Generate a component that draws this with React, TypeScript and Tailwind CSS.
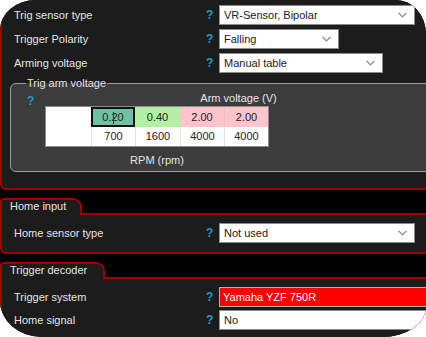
import React from "react";

const RED = "border-[#9e0000]";

function Chevron() {
  return (
    <svg width="9" height="6" viewBox="0 0 9 6" className="shrink-0">
      <path d="M0.5 0.8 L4.5 4.8 L8.5 0.8" fill="none" stroke="#7a7a7a" strokeWidth="1.1" />
    </svg>
  );
}

function Dropdown({ text, w }: { text: string; w: string }) {
  return (
    <div className={`${w} h-[20px] bg-white border border-[#8a8a8a] flex items-center justify-between pl-[4px] pr-[7px] text-[#1a1a1a]`}>
      <span>{text}</span>
      <Chevron />
    </div>
  );
}

function Q() {
  return <span className="w-[13px] text-[#1f9bd1] font-bold text-[12px] leading-none">?</span>;
}

function Row({ label, children }: { label: string; children: React.ReactNode }) {
  return (
    <div className="flex items-center h-[20px]">
      <span className="w-[192px] text-[#e4e4e4]">{label}</span>
      <Q />
      {children}
    </div>
  );
}

function Tab({ text, w }: { text: string; w: string }) {
  return (
    <div className={`${w} h-[17px] relative z-10 -mb-[2px] bg-[#1c1c1c] border-2 border-b-0 ${RED} rounded-tr-[9px] rounded-tl-[4px] pl-[8px] flex items-center text-[#e4e4e4]`}>
      <span className="-mt-[2px]">{text}</span>
    </div>
  );
}

export default function App() {
  return (
    <div className="w-[426px] h-[337px] bg-white overflow-hidden" style={{ fontFamily: '"Liberation Sans", Arial, sans-serif' }}>
      <div className="w-full h-full bg-black overflow-hidden rounded-tl-[36px_30px] rounded-tr-[30px_34px] rounded-bl-[42px_36px] rounded-br-[44px_30px] text-[11px] leading-[13px]">
        {/* Top panel */}
        <div className={`w-[460px] h-[190px] bg-[#1c1c1c] border-l-2 border-b-2 ${RED} rounded-bl-[6px] pt-[5px] pl-[12px]`}>
          <div className="flex flex-col gap-[4px]">
            <Row label="Trig sensor type">
              <Dropdown text="VR-Sensor, Bipolar" w="w-[196px]" />
            </Row>
            <Row label="Trigger Polarity">
              <Dropdown text="Falling" w="w-[120px]" />
            </Row>
            <Row label="Arming voltage">
              <Dropdown text="Manual table" w="w-[164px]" />
            </Row>
          </div>
          <fieldset className="mt-[4px] -ml-[4px] h-[95px] bg-[#3c3c3c] border border-[#9c9c9c] rounded-[6px]">
            <legend className="ml-[15px] px-[1px] text-[#e4e4e4]">Trig arm voltage</legend>
            <div className="pt-[2px] h-[16px] flex items-center relative">
              <span className="ml-[16px] text-[#1f9bd1] font-bold text-[12px] leading-none mt-[4px]">?</span>
              <span className="ml-[166px] text-[#e4e4e4] -mt-[2px]">Arm voltage (V)</span>
            </div>
            <div className="ml-[34px] w-[224px] border border-[#8c8c8c] bg-white grid grid-cols-[45px_44px_45px_44px_44px] grid-rows-[20px_19px] text-center text-[#222]">
              <div className="bg-white" />
              <div className="bg-[#6fc1a1] border-2 border-[#111] flex items-center justify-center relative">
                0.20
                <span className="absolute left-1/2 top-[3px] w-[1px] h-[12px] bg-[#333]" />
              </div>
              <div className="bg-[#b3f0a6] flex items-center justify-center">0.40</div>
              <div className="bg-[#ffc4cc] flex items-center justify-center">2.00</div>
              <div className="bg-[#ffc4cc] border-l border-[#e8c0c6] flex items-center justify-center">2.00</div>
              <div className="bg-white" />
              <div className="border-l border-[#e2e2e2] flex items-center justify-center">700</div>
              <div className="border-l border-[#e2e2e2] flex items-center justify-center">1600</div>
              <div className="border-l border-[#e2e2e2] flex items-center justify-center">4000</div>
              <div className="border-l border-[#e2e2e2] flex items-center justify-center">4000</div>
            </div>
            <div className="ml-[34px] w-[224px] text-center mt-[7px] text-[#e4e4e4]">RPM (rpm)</div>
          </fieldset>
        </div>

        {/* Home input */}
        <div className="mt-[8px]">
          <Tab text="Home input" w="w-[82px]" />
          <div className={`w-[460px] h-[41px] bg-[#1c1c1c] border-l-2 border-t-2 border-b-2 ${RED} rounded-bl-[6px] pt-[8px] pl-[12px]`}>
            <Row label="Home sensor type">
              <Dropdown text="Not used" w="w-[196px]" />
            </Row>
          </div>
        </div>

        {/* Trigger decoder */}
        <div className="mt-[8px]">
          <Tab text="Trigger decoder" w="w-[105px]" />
          <div className={`w-[460px] h-[80px] bg-[#1c1c1c] border-l-2 border-t-2 ${RED} pt-[8px] pl-[12px] flex flex-col gap-[3px]`}>
            <Row label="Trigger system">
              <div className="w-[230px] h-[20px] bg-[#ff0000] border border-[#b0b0b0] pl-[3px] flex items-center text-white">Yamaha YZF 750R</div>
            </Row>
            <Row label="Home signal">
              <div className="w-[230px] h-[20px] bg-white border border-[#8a8a8a] pl-[4px] flex items-center text-[#1a1a1a]">No</div>
            </Row>
          </div>
        </div>
      </div>
    </div>
  );
}
